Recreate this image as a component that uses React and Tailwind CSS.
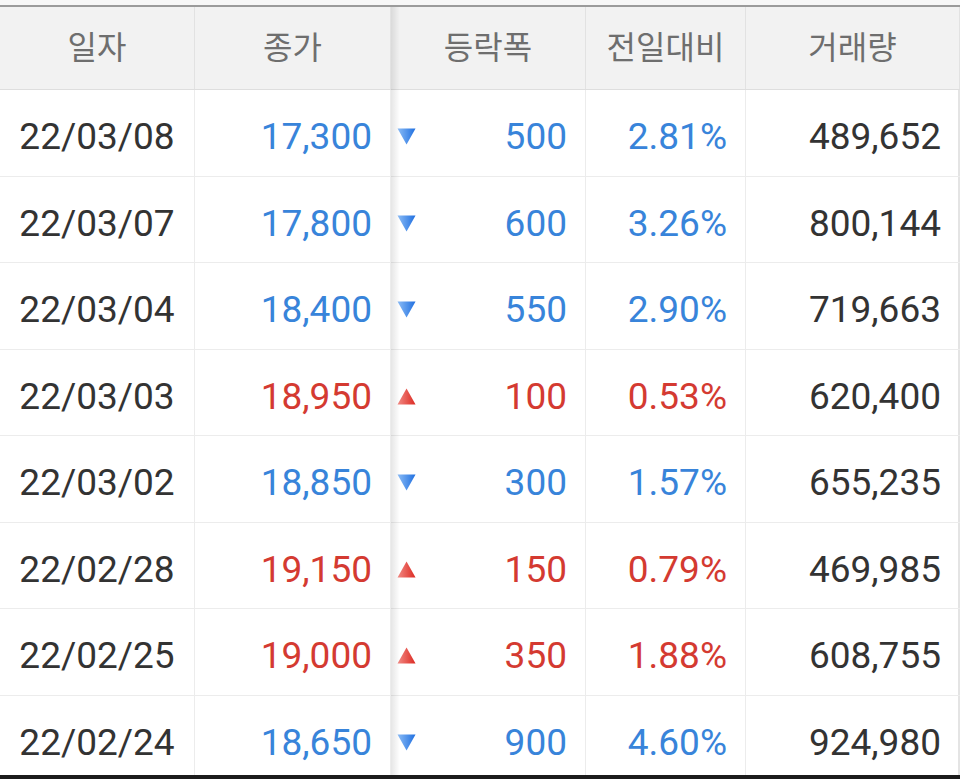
import React from "react";

const rows = [
  { date: "22/03/08", close: "17,300", diff: "500", pct: "2.81%", vol: "489,652", up: false },
  { date: "22/03/07", close: "17,800", diff: "600", pct: "3.26%", vol: "800,144", up: false },
  { date: "22/03/04", close: "18,400", diff: "550", pct: "2.90%", vol: "719,663", up: false },
  { date: "22/03/03", close: "18,950", diff: "100", pct: "0.53%", vol: "620,400", up: true },
  { date: "22/03/02", close: "18,850", diff: "300", pct: "1.57%", vol: "655,235", up: false },
  { date: "22/02/28", close: "19,150", diff: "150", pct: "0.79%", vol: "469,985", up: true },
  { date: "22/02/25", close: "19,000", diff: "350", pct: "1.88%", vol: "608,755", up: true },
  { date: "22/02/24", close: "18,650", diff: "900", pct: "4.60%", vol: "924,980", up: false },
];

const cols = "grid grid-cols-[195px_196px_195px_160px_214px]";

const Arrow = ({ up }) =>
  up ? (
    <svg width="19" height="17" viewBox="0 0 19 17" className="shrink-0">
      <defs>
        <linearGradient id="gu" x1="0" y1="0" x2="1" y2="0">
          <stop offset="0" stopColor="#f28a84" />
          <stop offset="1" stopColor="#dc2a22" />
        </linearGradient>
      </defs>
      <path d="M9.5 0.5 L18.5 16.5 L0.5 16.5 Z" fill="url(#gu)" />
    </svg>
  ) : (
    <svg width="19" height="17" viewBox="0 0 19 17" className="shrink-0">
      <defs>
        <linearGradient id="gd" x1="0" y1="0" x2="1" y2="0">
          <stop offset="0" stopColor="#8bbcf6" />
          <stop offset="1" stopColor="#1f6fe0" />
        </linearGradient>
      </defs>
      <path d="M0.5 0.5 L18.5 0.5 L9.5 16.5 Z" fill="url(#gd)" />
    </svg>
  );

export default function App() {
  return (
    <div
      className="relative w-[960px] h-[779px] overflow-hidden bg-white flex flex-col"
      style={{ fontFamily: 'Roboto, "Noto Sans CJK KR", sans-serif' }}
    >
      <div className="h-[5px] bg-[#f7f7f7] shrink-0" />
      <div className="h-[2px] bg-[#9b9b9b] shrink-0" />

      {/* header */}
      <div className={`${cols} h-[83px] shrink-0 bg-[#f2f2f2] border-b border-[#dedede] text-[32px] text-[#6e6e6e]`}>
        {["일자", "종가", "등락폭", "전일대비", "거래량"].map((h) => (
          <div key={h} className="flex items-center justify-center border-r border-[#e2e2e2]">
            {h}
          </div>
        ))}
      </div>

      {/* rows */}
      {rows.map((r) => {
        const color = r.up ? "text-[#d43a31]" : "text-[#3884da]";
        return (
          <div key={r.date} className={`${cols} h-[86.5px] shrink-0 border-b border-[#ececec] text-[37px]`}>
            <div className="flex items-center justify-center border-r border-[#ececec] text-[#333333] pt-[8px]">
              {r.date}
            </div>
            <div className={`flex items-center justify-end pr-[18px] border-r border-[#ececec] pt-[8px] ${color}`}>
              {r.close}
            </div>
            <div className={`flex items-center justify-between pl-[6px] pr-[18px] border-r border-[#ececec] pt-[8px] ${color}`}>
              <Arrow up={r.up} />
              <span>{r.diff}</span>
            </div>
            <div className={`flex items-center justify-end pr-[18px] border-r border-[#ececec] pt-[8px] ${color}`}>
              {r.pct}
            </div>
            <div className="flex items-center justify-end pr-[17px] border-r-2 border-[#e4e4e4] text-[#333333] pt-[8px]">
              {r.vol}
            </div>
          </div>
        );
      })}

      {/* scroll shadow on frozen columns */}
      <div className="absolute left-[391px] top-[7px] bottom-0 w-[9px] bg-gradient-to-r from-black/10 to-transparent" />
      <div className="absolute left-0 right-0 bottom-0 h-[4px] bg-[#1c1c1c]" />
    </div>
  );
}
